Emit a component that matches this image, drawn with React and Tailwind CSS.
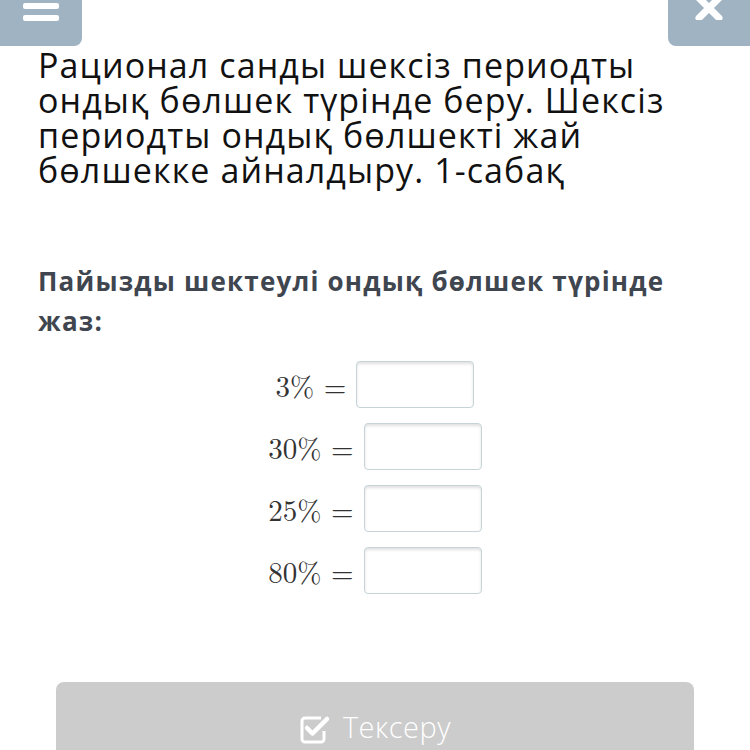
import React from "react";

function Row({ label }) {
  return (
    <div className="flex items-center justify-center">
      <span className="text-[29px] text-[#333] mr-[10px]" style={{ fontFamily: '"Latin Modern Roman", "DejaVu Serif", "Liberation Serif", serif' }}>
        {label}
      </span>
      <div className="w-[118px] h-[47px] rounded-[4px] border border-[#c6d4d9] bg-white shadow-[inset_0_2px_3px_rgba(0,0,0,0.12)]" />
    </div>
  );
}

export default function App() {
  return (
    <div className="w-[750px] h-[750px] overflow-hidden bg-white relative" style={{ fontFamily: '"Open Sans", "Noto Sans", sans-serif' }}>
      <div className="flex justify-between">
        <div className="w-[82px] h-[46px] bg-[#9fb3c2] rounded-br-[8px] flex flex-col items-center gap-[6px] pt-[3px]">
          <div className="w-[36px] h-[6px] bg-white rounded-[2px]" />
          <div className="w-[36px] h-[6px] bg-white rounded-[2px]" />
        </div>
        <div className="w-[82px] h-[46px] bg-[#9fb3c2] rounded-bl-[8px] flex justify-center">
          <svg width="30" height="22" viewBox="0 0 30 22" className="mt-[-2px]">
            <path d="M5 0 L25 20 M25 0 L5 20" stroke="white" strokeWidth="7" strokeLinecap="round" />
          </svg>
        </div>
      </div>
      <div className="px-[38px] mt-[2px]">
        <h1 className="text-[34px] leading-[35px] tracking-[1.1px] text-[#111] font-normal">
          Рационал санды шексіз периодты ондық бөлшек түрінде беру. Шексіз периодты ондық бөлшекті жай бөлшекке айналдыру. 1-сабақ
        </h1>
        <p className="mt-[73px] text-[26px] leading-[40px] tracking-[1.2px] font-bold text-[#3f4650] pr-[30px]">
          Пайызды шектеулі ондық бөлшек түрінде жаз:
        </p>
      </div>
      <div className="mt-[20px] flex flex-col gap-[15px]">
        <Row label="3% =" />
        <Row label="30% =" />
        <Row label="25% =" />
        <Row label="80% =" />
      </div>
      <div className="mx-[56px] mt-[88px] h-[80px] bg-[#cccccc] rounded-t-[8px] flex items-start justify-center pt-[27px] gap-[12px]">
        <svg width="32" height="32" viewBox="0 0 32 32" className="mt-[3px]">
          <path d="M22 6 H6 a3 3 0 0 0 -3 3 V27 a3 3 0 0 0 3 3 H22 a3 3 0 0 0 3 -3 V19" fill="none" stroke="white" strokeWidth="3" strokeLinejoin="round" />
          <path d="M8 16 L13.5 21.5 L28 7" fill="none" stroke="white" strokeWidth="4.5" strokeLinecap="round" strokeLinejoin="round" />
        </svg>
        <span className="text-[29px] text-white font-light leading-[36px] tracking-[0.5px]">Тексеру</span>
      </div>
    </div>
  );
}
